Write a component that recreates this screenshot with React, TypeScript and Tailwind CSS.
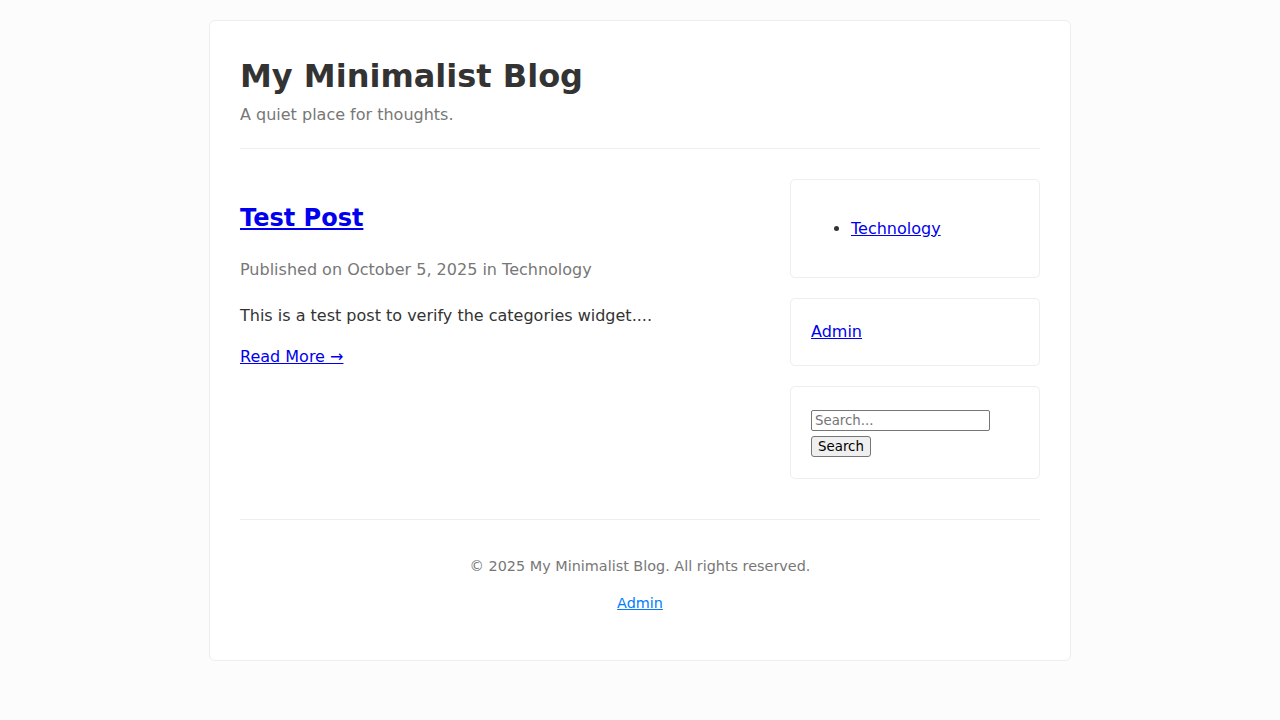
import React from "react";

export default function App() {
  return (
    <div
      className="min-h-[720px] bg-[#fcfcfc] pt-[20px] pb-[20px] text-[#333] leading-[1.6]"
      style={{ fontFamily: "'DejaVu Sans', 'Noto Sans', sans-serif" }}
    >
      <div className="mx-auto w-[862px] rounded-[6px] border border-[#eee] bg-white px-[30px] pt-[30px] pb-[31.5px]">
        <header className="border-b border-[#eee] pb-[20px]">
          <h1 className="m-0 text-[32px] font-bold leading-[1.6] text-[#333]">My Minimalist Blog</h1>
          <p className="m-0 text-[16px] text-[#777]">A quiet place for thoughts.</p>
        </header>

        <div className="mt-[30px] flex gap-[30px]">
          <main className="flex-1">
            <article>
              <h2 className="mt-[20px] text-[24px] font-bold leading-[1.6]">
                <a href="#" className="text-[#0000ee] underline">Test Post</a>
              </h2>
              <p className="mt-[20px] text-[16px] text-[#777]">Published on October 5, 2025 in Technology</p>
              <p className="mt-[20px] text-[16px] text-[#333]">This is a test post to verify the categories widget....</p>
              <p className="mt-[16px] text-[16px]">
                <a href="#" className="text-[#0000ee] underline">Read More →</a>
              </p>
            </article>
          </main>

          <aside className="flex w-[250px] flex-col gap-[20px]">
            <div className="rounded-[5px] border border-[#eee] p-[20px]">
              <ul className="my-[16px] list-disc pl-[40px] text-[16px]">
                <li>
                  <a href="#" className="text-[#0000ee] underline">Technology</a>
                </li>
              </ul>
            </div>
            <div className="rounded-[5px] border border-[#eee] p-[20px] text-[16px]">
              <a href="#" className="text-[#0000ee] underline">Admin</a>
            </div>
            <div className="rounded-[5px] border border-[#eee] p-[20px]">
              <form className="flex flex-col items-start pt-[3px] pb-[1px]" onSubmit={(e) => e.preventDefault()}>
                <input
                  type="text"
                  placeholder="Search..."
                  className="h-[21px] w-[179px] rounded-[2px] border border-[#767676] px-[3px] text-[13.33px] leading-normal text-black placeholder:text-[#757575]"
                />
                <button
                  type="submit"
                  className="mt-[5px] h-[21px] w-[60px] rounded-[3px] border border-[#767676] bg-[#efefef] px-0 text-[13.33px] leading-none text-black"
                >
                  Search
                </button>
              </form>
            </div>
          </aside>
        </div>

        <footer className="mt-[40px] border-t border-[#eee] pt-[21.5px] text-center text-[14.4px]">
          <p className="my-[13.5px] text-[#777]">© 2025 My Minimalist Blog. All rights reserved.</p>
          <p className="my-[13.5px]">
            <a href="#" className="text-[#007bff] underline">Admin</a>
          </p>
        </footer>
      </div>
    </div>
  );
}
